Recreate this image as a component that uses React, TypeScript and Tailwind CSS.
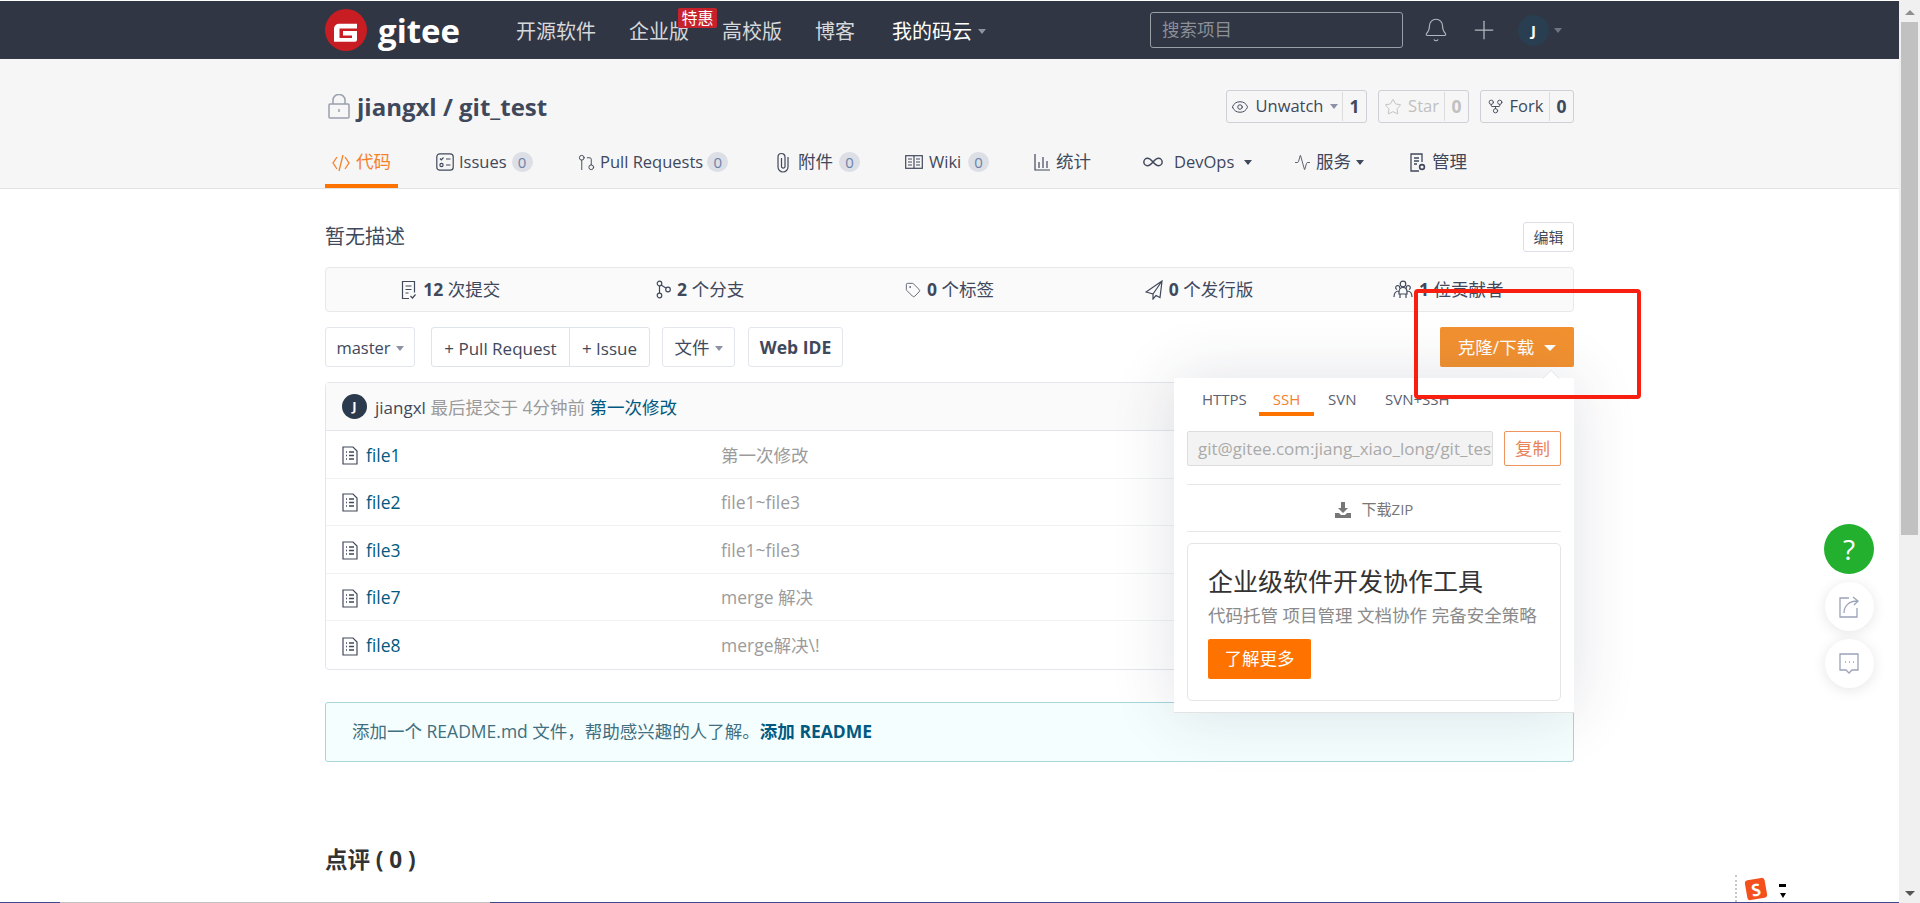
import { Activity, Infinity as InfinityIcon, GitFork, Eye, Star, Tag, GitPullRequest, Bell, Plus } from "lucide-react";

const navItems = ["开源软件", "企业版", "高校版", "博客"];

const files = [
  { name: "file1", msg: "第一次修改" },
  { name: "file2", msg: "file1~file3" },
  { name: "file3", msg: "file1~file3" },
  { name: "file7", msg: "merge 解决" },
  { name: "file8", msg: "merge解决\\!" },
];

function Caret({ color = "border-t-[#8c92a4]" }: { color?: string }) {
  return <span className={`inline-block shrink-0 w-0 h-0 border-x-[4.5px] border-x-transparent border-t-[5px] ${color}`} />;
}

function CountBadge() {
  return (
    <span className="ml-auto shrink-0 w-[21px] h-[20px] rounded-full bg-[#dcdfe6] text-[#6f7fa8] text-[15px] flex items-center justify-center">
      0
    </span>
  );
}

function FileIcon() {
  return (
    <svg width="16" height="19" viewBox="0 0 16 19" fill="none" stroke="#40485b" strokeWidth="1.2">
      <path d="M1 1h10l4 4v13H1z" />
      <path d="M4 6h1M7 6h5M4 9.5h1M7 9.5h5M4 13h1M7 13h5" strokeWidth="1.5" />
    </svg>
  );
}

function IssuesIcon() {
  return (
    <svg width="18" height="18" viewBox="0 0 18 18" fill="none" stroke="#40485b" strokeWidth="1.2" className="shrink-0">
      <rect x="0.8" y="0.8" width="16.4" height="16.4" rx="3" />
      <path d="M4 5.500l1.300 1.300L7.500 4.500M10 6h4.500M10 12h4.500" />
      <circle cx="5.500" cy="12" r="1.600" />
    </svg>
  );
}

function BookIcon() {
  return (
    <svg width="18" height="14" viewBox="0 0 18 14" fill="none" stroke="#40485b" strokeWidth="1.2" className="shrink-0">
      <rect x="0.7" y="0.7" width="16.6" height="12.6" />
      <path d="M9 1v12M3 4h4M3 7h4M3 10h4M11 4h4M11 7h4M11 10h4" />
    </svg>
  );
}

function ChartIcon() {
  return (
    <svg width="16" height="17" viewBox="0 0 16 17" fill="none" stroke="#40485b" strokeWidth="1.2" className="shrink-0">
      <path d="M1 0v16h15M5 8v6M9 3v11M13 7v7" />
    </svg>
  );
}

function ManageIcon() {
  return (
    <svg width="16" height="19" viewBox="0 0 16 19" fill="none" stroke="#40485b" strokeWidth="1.3" className="shrink-0">
      <path d="M9 18H1V1h11v8" />
      <path d="M4 5h5M4 8h5M4 11h3" />
      <circle cx="12" cy="14" r="2.400" strokeWidth="1.600" />
    </svg>
  );
}

function CommitIcon() {
  return (
    <svg width="16" height="20" viewBox="0 0 16 20" fill="none" stroke="#40485b" strokeWidth="1.2">
      <path d="M8 18.500H1.500v-17h12v11" />
      <path d="M4.500 6h6M4.500 9.500h6M4.500 13h3M9.500 16l2 2 3-3.500" />
    </svg>
  );
}

function RepoButton({ label, count, icon, caret, muted }: { label: string; count: string; icon: React.ReactNode; caret?: boolean; muted?: boolean }) {
  return (
    <div className={`flex h-[33px] items-stretch border border-[#cfcfd8] rounded-[3px] text-[16.5px] ${muted ? "text-[#c0c0c0]" : "text-[#40485b]"}`}>
      <span className="flex-1 min-w-0 flex items-center justify-center gap-[6px]">
        {icon}
        {label}
        {caret && <Caret />}
      </span>
      <span className={`shrink-0 my-[1px] flex items-center justify-center w-[24px] border-l border-[#dcdcdc] font-bold text-[17.5px] ${muted ? "text-[#c0c0c0]" : "text-[#40485b]"}`}>
        {count}
      </span>
    </div>
  );
}

function Stat({ icon, num, label }: { icon: React.ReactNode; num: string; label: string }) {
  return (
    <div className="flex-1 flex items-center justify-center gap-[6px] text-[17.5px] text-[#40485b]">
      {icon}
      <span>
        <b>{num}</b> {label}
      </span>
    </div>
  );
}

export default function App() {
  return (
    <div className="relative h-[903px] overflow-hidden bg-white flex font-['Open_Sans','Noto_Sans_CJK_SC',sans-serif] text-[17.5px] leading-none text-[#40485b]">
      <main className="flex-1 min-w-0">
        <header className="mt-px h-[58px] bg-[#303643]">
          <div className="w-[1249px] mx-auto h-full flex items-center">
            <svg width="42" height="42" viewBox="0 0 42 42">
              <circle cx="21" cy="21" r="21" fill="#c71d23" />
              <path fill="#fff" d="M9 19.700a5 5 0 0 1 5-5h18v4.700H14.500v9.600H27v-2.500h-9v-4.500h14v8.700a2 2 0 0 1-2 2H9z" />
            </svg>
            <span className="ml-[11px] text-[33px] font-bold text-white">gitee</span>
            <nav className="ml-[56px] pt-[3px] flex items-center gap-[33px] text-[20px] text-[#d6d8dc]">
              {navItems.map((item) => (
                <span key={item} className="relative">
                  {item}
                  {item === "企业版" && (
                    <span className="absolute left-[49px] top-[-14px] w-[39px] h-[20px] rounded-[2px] bg-[#c7222c] text-white text-[16px] flex items-center justify-center">
                      特惠
                    </span>
                  )}
                </span>
              ))}
              <span className="ml-[4px] flex items-center gap-[6px] text-white">
                我的码云
                <Caret />
              </span>
            </nav>
            <div className="ml-auto w-[253px] h-[36px] border border-[#9a9ea6] rounded-[3px] flex items-center px-[11px] text-[#8b8f98]">
              搜索项目
            </div>
            <Bell size={26} strokeWidth={1} className="ml-[20px] text-[#b4b8c0]" />
            <Plus size={30} strokeWidth={1} className="ml-[20px] text-[#b4b8c0]" />
            <span className="ml-[19px] w-[31px] h-[31px] rounded-full bg-[#2a3e52] text-white text-[15px] font-bold flex items-center justify-center">
              J
            </span>
            <span className="ml-[5px] mr-[12px] flex">
              <Caret color="border-t-[#6f7480]" />
            </span>
          </div>
        </header>

        <section className="h-[130px] bg-[#f6f6f6] border-b border-[#e3e3e3]">
          <div className="w-[1249px] mx-auto">
            <div className="pt-[31px] flex items-center">
              <svg width="22" height="25" viewBox="0 0 22 25" fill="none" stroke="#9aa0ae" strokeWidth="1.500" className="ml-[3px]">
                <rect x="1" y="10" width="20" height="14" rx="1" />
                <path d="M5 10V6a6 5.500 0 0 1 12 0v4M11 15v3" />
              </svg>
              <h1 className="ml-[7px] text-[24px] font-bold text-[#40485b]">jiangxl / git_test</h1>
              <div className="ml-auto flex gap-[11px]">
                <div className="w-[141px]">
                  <RepoButton label="Unwatch" count="1" caret icon={<Eye size={18} strokeWidth={1.3} />} />
                </div>
                <div className="w-[91px]">
                  <RepoButton label="Star" count="0" muted icon={<Star size={18} strokeWidth={1.3} />} />
                </div>
                <div className="w-[94px]">
                  <RepoButton label="Fork" count="0" icon={<GitFork size={17} strokeWidth={1.3} />} />
                </div>
              </div>
            </div>
            <div className="mt-[20px] h-[45px] flex items-stretch whitespace-nowrap text-[17.5px] text-[#40485b]">
              <span className="w-[73px] border-b-4 border-[#fe7300] text-[#f5802a] flex items-center justify-center gap-[6px] pb-[3px]">
                <svg width="18" height="20" viewBox="0 0 18 20" fill="none" stroke="#f5802a" strokeWidth="1.300">
                  <path d="M5 5l-4 6 4 6M13 5l4 6-4 6M11 3L7 19" />
                </svg>
                代码
              </span>
              <span className="ml-[38px] w-[96px] flex items-center gap-[5px] pb-[7px] text-[16.5px]">
                <IssuesIcon />
                Issues
                <CountBadge />
              </span>
              <span className="ml-[47px] w-[149px] flex items-center gap-[4px] pb-[7px] text-[16.5px]">
                <GitPullRequest size={19} strokeWidth={1.2} className="ml-[-2px] shrink-0" />
                Pull Requests
                <CountBadge />
              </span>
              <span className="ml-[49px] w-[83px] flex items-center gap-[6px] pb-[7px]">
                <svg width="12" height="21" viewBox="0 0 12 21" fill="none" stroke="#40485b" strokeWidth="1.200" className="shrink-0 mr-[3px]">
                  <path d="M11 5v10a5 5 0 0 1-10 0V5a3.500 3.500 0 0 1 7 0v10a2 2 0 0 1-3.500 0V6" />
                </svg>
                附件
                <CountBadge />
              </span>
              <span className="ml-[45px] w-[84px] flex items-center gap-[6px] pb-[7px] text-[16.5px]">
                <BookIcon />
                Wiki
                <CountBadge />
              </span>
              <span className="ml-[45px] w-[58px] flex items-center gap-[6px] pb-[7px]">
                <ChartIcon />
                统计
              </span>
              <span className="ml-[50px] w-[106px] flex items-center gap-[10px] pb-[7px] text-[16.5px]">
                <InfinityIcon size={22} strokeWidth={1.600} className="shrink-0" />
                DevOps
                <span className="ml-auto flex">
                  <Caret color="border-t-[#40485b]" />
                </span>
              </span>
              <span className="ml-[46px] w-[70px] flex items-center gap-[5px] pb-[7px]">
                <Activity size={17} strokeWidth={1.2} className="shrink-0" />
                服务
                <span className="flex">
                  <Caret color="border-t-[#40485b]" />
                </span>
              </span>
              <span className="ml-[46px] flex items-center gap-[6px] pb-[7px]">
                <ManageIcon />
                管理
              </span>
            </div>
          </div>
        </section>

        <div className="w-[1249px] mx-auto">
          <div className="pt-[33px] flex items-center justify-between">
            <span className="text-[20px]">暂无描述</span>
            <span className="w-[51px] h-[30px] border border-[#dcdfe6] rounded-[3px] text-[15px] flex items-center justify-center">
              编辑
            </span>
          </div>

          <div className="mt-[15px] h-[45px] bg-[#fafafa] border border-[#e8e8e8] rounded-[4px] flex">
            <Stat icon={<CommitIcon />} num="12" label="次提交" />
            <Stat
              icon={
                <svg width="15" height="19" viewBox="0 0 15 19" fill="none" stroke="#40485b" strokeWidth="1.200">
                  <circle cx="3.500" cy="3.500" r="2.300" />
                  <circle cx="3.500" cy="15.500" r="2.300" />
                  <circle cx="12" cy="9.500" r="2.300" />
                  <path d="M3.500 6v7M5 5l5 3" />
                </svg>
              }
              num="2"
              label="个分支"
            />
            <Stat icon={<Tag size={16} strokeWidth={1.2} />} num="0" label="个标签" />
            <Stat
              icon={
                <svg width="18" height="20" viewBox="0 0 18 20" fill="none" stroke="#40485b" strokeWidth="1.200">
                  <path d="M17 1L1 12l7 2v5l3-3.500 4 2zM17 1L8 14" />
                </svg>
              }
              num="0"
              label="个发行版"
            />
            <Stat
              icon={
                <svg width="20" height="19" viewBox="0 0 20 19" fill="none" stroke="#40485b" strokeWidth="1.200">
                  <circle cx="10" cy="4" r="2.800" />
                  <path d="M6 12c0-6 8-6 8 0v2H6zM4 9.500a2 2 0 1 1 2.500-1M16 9.500a2 2 0 1 0-2.500-1M1 17c0-5 3-6 5-6M19 17c0-5-3-6-5-6M7 14v4M13 14v4" />
                </svg>
              }
              num="1"
              label="位贡献者"
            />
          </div>

          <div className="mt-[15px] h-[40px] flex items-stretch">
            <span className="w-[90px] border border-[#e3e6ec] rounded-[3px] text-[16.5px] pt-[2px] flex items-center justify-center gap-[5px]">
              master
              <Caret />
            </span>
            <div className="ml-[16px] w-[219px] border border-[#dfe3ea] rounded-[3px] text-[17px] flex">
              <span className="w-[137px] pt-[2px] flex items-center justify-center">+ Pull Request</span>
              <span className="flex-1 pt-[2px] border-l border-[#dfe3ea] flex items-center justify-center">+ Issue</span>
            </div>
            <span className="ml-[12px] w-[73px] border border-[#e3e6ec] rounded-[3px] pt-[2px] flex items-center justify-center gap-[5px]">
              文件
              <Caret />
            </span>
            <span className="ml-[13px] w-[95px] border border-[#e3e6ec] rounded-[3px] font-bold pt-[2px] flex items-center justify-center">
              Web IDE
            </span>
            <div className="relative ml-auto w-[134px] z-10">
              <span className="h-full bg-[#f29130] rounded-[2px] text-white pt-[2px] flex items-center justify-center gap-[10px]">
                克隆/下载
                <span className="w-0 h-0 border-x-[6.5px] border-x-transparent border-t-[6px] border-t-white" />
              </span>
              <div className="absolute top-[51px] right-0 w-[400px] h-[335px] bg-white shadow-[0_0_60px_rgba(40,50,80,0.14)] border-b border-[#e3e3e3] px-[13px]">
                <span className="absolute right-[17px] top-[-6px] w-[12px] h-[12px] rotate-45 bg-white border-l border-t border-[#e8e8e8]" />
                <div className="relative flex h-[38px] text-[15px] text-[#5a6172]">
                  <span className="w-[72px] pl-[15px] pt-[14px]">HTTPS</span>
                  <span className="w-[55px] border-b-4 border-[#fe7300] text-[#f5802a] text-center pt-[14px]">SSH</span>
                  <span className="ml-[14px] w-[57px] pt-[14px]">SVN</span>
                  <span className="pt-[14px]">SVN+SSH</span>
                </div>
                <div className="mt-[15px] flex gap-[11px] h-[35px]">
                  <span className="w-[306px] overflow-hidden whitespace-nowrap bg-[#f3f3f3] border border-[#ddd] rounded-[2px] text-[17px] text-[#aaa] flex items-center pl-[10px]">
                    git@gitee.com:jiang_xiao_long/git_test.git
                  </span>
                  <span className="flex-1 border border-[#f0945e] rounded-[2px] text-[#e8835a] flex items-center justify-center">
                    复制
                  </span>
                </div>
                <div className="mt-[18px] h-[48px] border-y border-[#e8e8e8] pt-[3px] flex items-center justify-center gap-[11px] text-[15px] text-[#777]">
                  <svg width="16" height="16" viewBox="0 0 16 16" fill="#777">
                    <path d="M6 0h4v6h3L8 11 3 6h3zM0 11h4l2 2h4l2-2h4v5H0z" />
                  </svg>
                  下载ZIP
                </div>
                <div className="mt-[11px] h-[158px] border border-[#e5e5e5] rounded-[5px] px-[20px] pt-[25px]">
                  <h3 className="text-[25px] text-[#333]">企业级软件开发协作工具</h3>
                  <p className="mt-[13px] text-[#8a8a8a] whitespace-nowrap">代码托管 项目管理 文档协作 完备安全策略</p>
                  <span className="mt-[14px] w-[103px] h-[40px] rounded-[2px] bg-[#fe7300] text-white flex items-center justify-center">
                    了解更多
                  </span>
                </div>
              </div>
            </div>
          </div>

          <div className="mt-[15px] border border-[#e3e6ec] rounded-[4px]">
            <div className="h-[48px] bg-[#fafafa] border-b border-[#e3e6ec] flex items-center pl-[16px] gap-[8px]">
              <span className="w-[25px] h-[25px] rounded-full bg-[#2b3a4c] text-white text-[13px] font-bold flex items-center justify-center">
                J
              </span>
              <span className="pt-[2px]">
                <span className="text-[17px]">jiangxl</span> <span className="text-[#9b9b9b]">最后提交于 4分钟前</span> <span className="text-[#005980]">第一次修改</span>
              </span>
            </div>
            {files.map((f, i) => (
              <div key={f.name} className={`h-[47.6px] pt-[2px] flex items-center pl-[16px] ${i < files.length - 1 ? "border-b border-[#f0f2f5]" : ""}`}>
                <FileIcon />
                <span className="ml-[8px] w-[355px] text-[#005980]">{f.name}</span>
                <span className="text-[#9b9b9b]">{f.msg}</span>
              </div>
            ))}
          </div>

          <div className="mt-[32px] h-[60px] bg-[#f5fefe] border border-[#a8d4dc] rounded-[3px] flex items-center pl-[26px] text-[#3f6f80]">
            添加一个 README.md 文件，帮助感兴趣的人了解。
            <b className="text-[#005980]">添加 README</b>
          </div>

          <h2 className="mt-[87px] text-[22.5px] font-bold text-[#333]">点评 ( 0 )</h2>
        </div>
      </main>

      <aside className="w-[21px] bg-[#f0f0f0] flex flex-col items-center">
        <span className="mt-[10px] w-0 h-0 border-x-[5px] border-x-transparent border-b-[5px] border-b-[#8f8f8f]" />
        <span className="mt-[7px] w-[17px] h-[513px] bg-[#c1c1c1]" />
        <span className="mt-auto mb-[7px] w-0 h-0 border-x-[5px] border-x-transparent border-t-[5px] border-t-[#555]" />
      </aside>

      {/* floating help buttons */}
      <div className="absolute left-[1824px] top-[524px] flex flex-col items-center gap-[8px]">
        <span className="w-[50px] h-[50px] rounded-full bg-[#22b02e] text-white text-[28px] flex items-center justify-center">?</span>
        <span className="w-[49px] h-[49px] rounded-full bg-white shadow-[0_2px_14px_rgba(0,0,0,0.1)] flex items-center justify-center">
          <svg width="20" height="22" viewBox="0 0 20 22" fill="none" stroke="#9aa3b8" strokeWidth="1.3">
            <path d="M10 2H1v19h17v-9" />
            <path d="M5 17c0-7 5-12 13-12M14 1l5 4-4 4" />
          </svg>
        </span>
        <span className="w-[49px] h-[49px] rounded-full bg-white shadow-[0_2px_14px_rgba(0,0,0,0.1)] flex items-center justify-center">
          <svg width="20" height="22" viewBox="0 0 20 22" fill="none" stroke="#9aa3b8" strokeWidth="1.3">
            <path d="M1 1h18v16h-6l-3 3-3-3H1z" />
            <path d="M6 9h1M10 9h1M14 9h1" strokeWidth="1.600" />
          </svg>
        </span>
      </div>

      {/* sogou input method tray */}
      <div className="absolute left-[1735px] top-[875px] flex items-start">
        <span className="w-[2px] h-[27px] border-l-2 border-dotted border-[#c8c8c8]" />
        <span className="ml-[9px] mt-[4px] w-[20px] h-[20px] rotate-[-10deg] bg-[#f4501e] rounded-[3px] text-white text-[17px] font-bold flex items-center justify-center">S</span>
        <span className="ml-[13px] mt-[9px] flex flex-col items-center gap-[6px]">
          <span className="w-[7px] h-[3px] bg-black" />
          <span className="w-0 h-0 border-x-[3.5px] border-x-transparent border-t-[5px] border-t-black" />
        </span>
      </div>

      {/* red annotation box */}
      <div className="absolute left-[1414px] top-[289px] w-[227px] h-[110px] border-[4px] border-[#f81e10] rounded-[4px] z-20" />

      {/* window edge */}
      <div className="absolute left-0 bottom-0 w-[1899px] h-px bg-[#3d4a8c]" />
      <div className="absolute left-[60px] bottom-0 w-[430px] h-px bg-[#c0c0c0]" />
    </div>
  );
}
